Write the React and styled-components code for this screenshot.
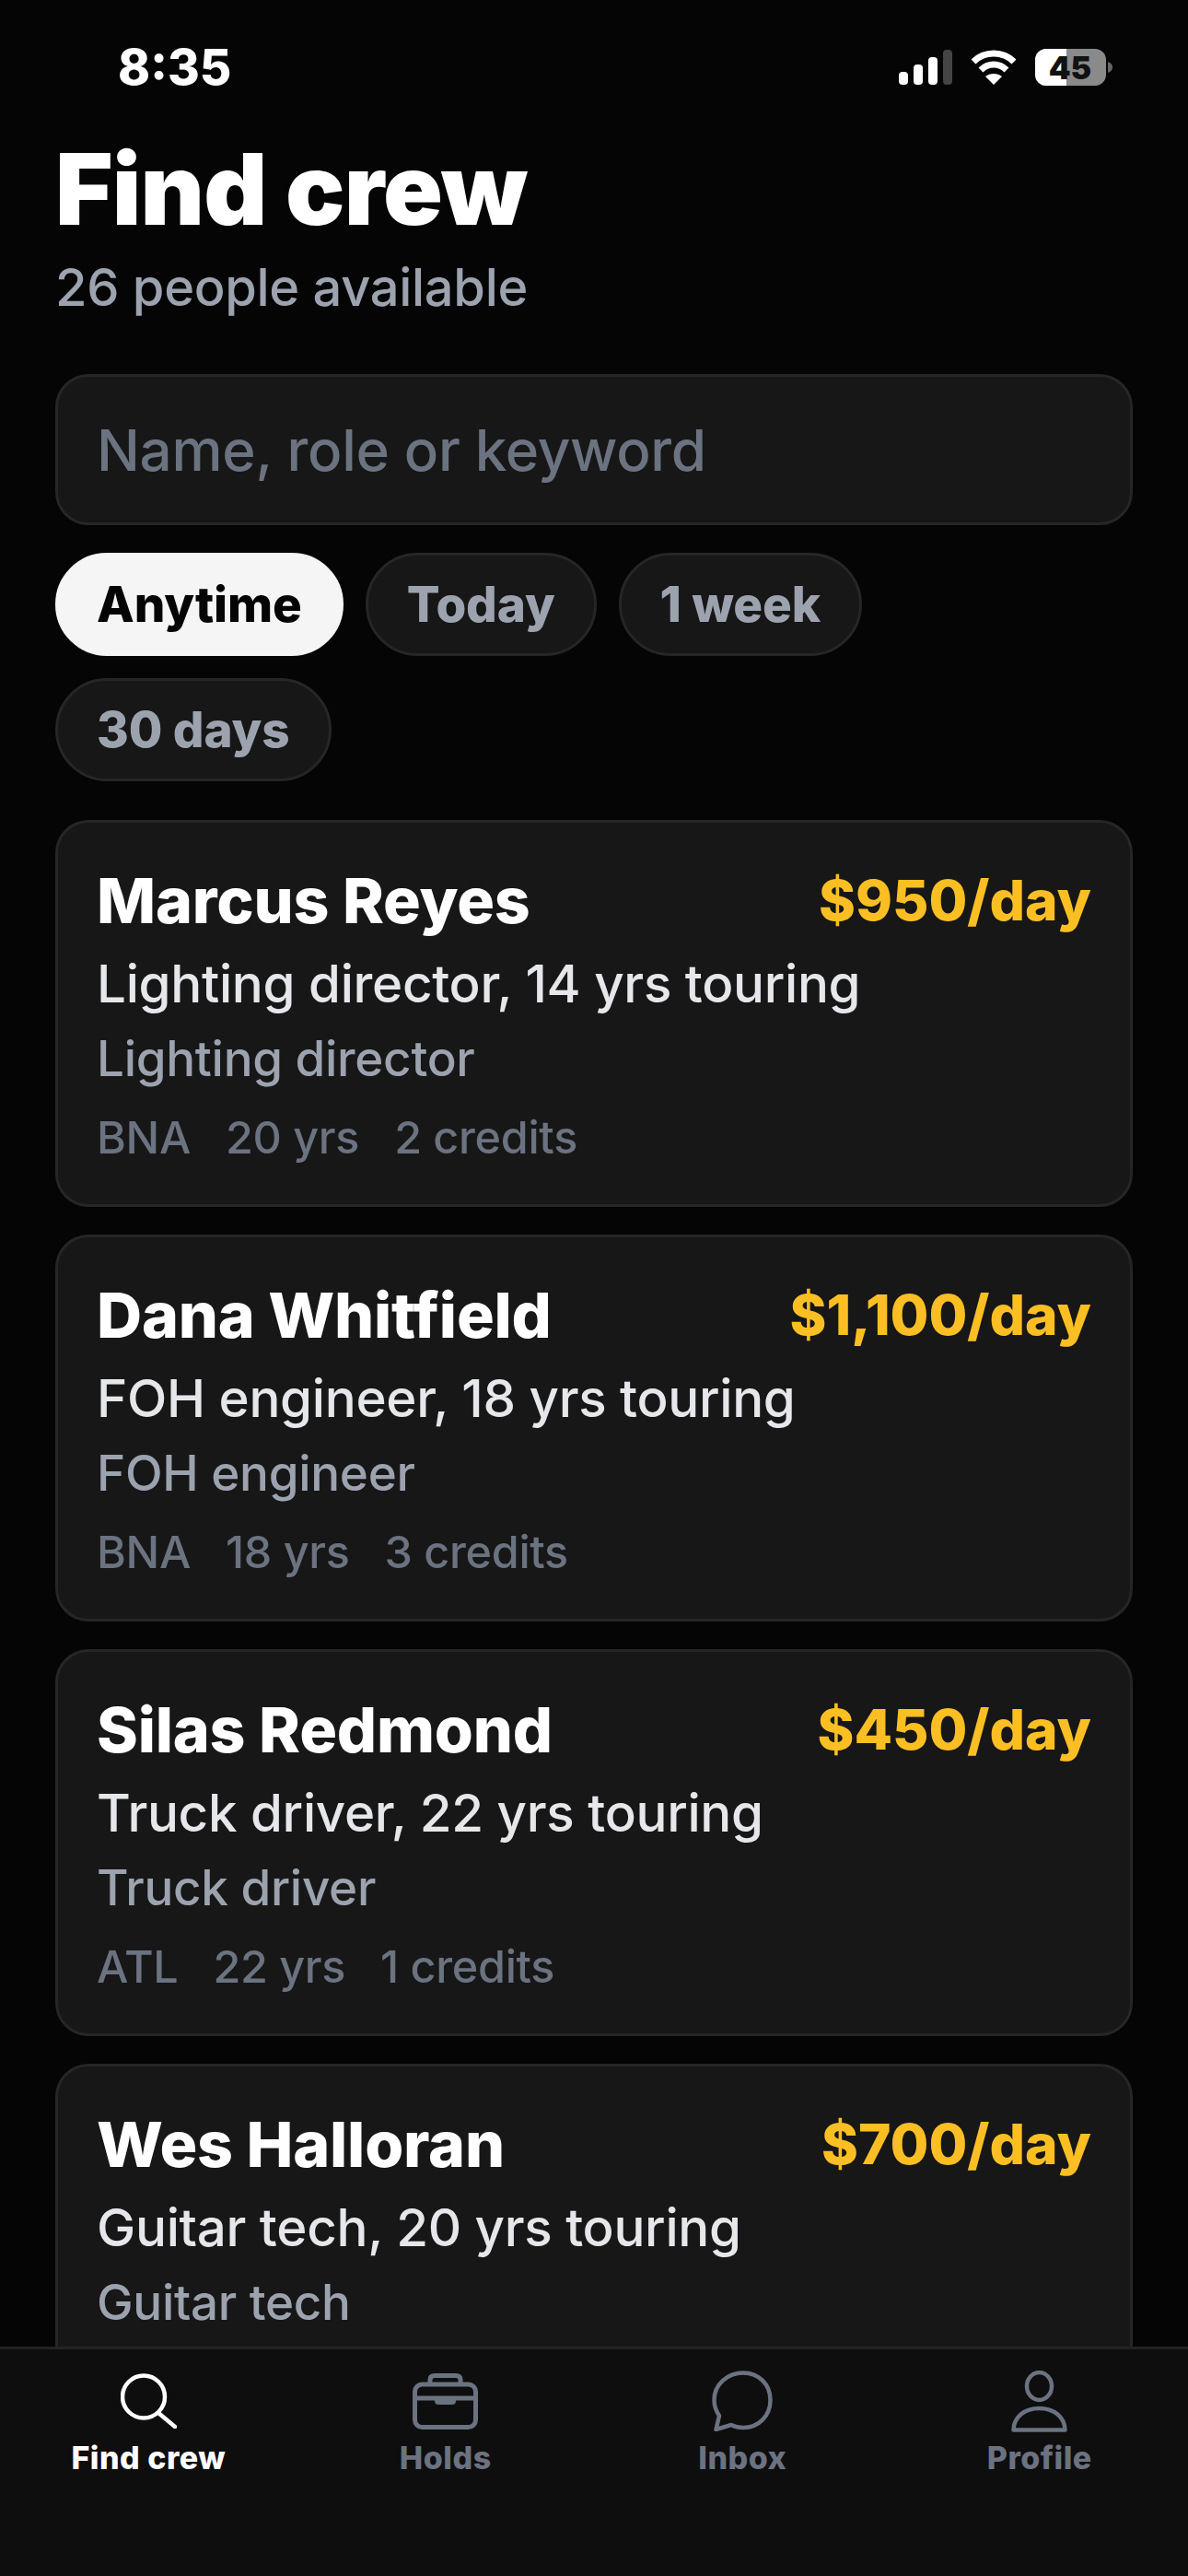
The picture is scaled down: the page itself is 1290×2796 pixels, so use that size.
import styled, { createGlobalStyle } from 'styled-components';

const GlobalStyle = createGlobalStyle`
html, body {
  margin: 0;
  padding: 0;
  background: #050506;
}
* { box-sizing: border-box; }
`

const Screen = styled.div`
position: relative;
width: 1290px;
height: 2796px;
overflow: hidden;
background: #050506;
font-family: Inter, "Liberation Sans", sans-serif;
`
const StatusBar = styled.div`
display: flex;
justify-content: space-between;
align-items: center;
height: 146px;
padding: 0 82px 0 128px;
`
const Clock = styled.div`
color: #fff;
font-size: 53px;
font-weight: 800;
`
const StatusIcons = styled.div`
display: flex;
align-items: center;
gap: 20px;
`
const Content = styled.div`
padding: 0 60px;
`
const Title = styled.h1`
margin: 0;
color: #fff;
font-size: 107px;
line-height: 118px;
font-weight: 900;
letter-spacing: -0.8px;
`
const SubTitle = styled.div`
margin-top: 14px;
color: #9ca3af;
font-size: 56px;
line-height: 68px;
font-weight: 500;
letter-spacing: -0.3px;
`
const SearchBox = styled.div`
display: flex;
align-items: center;
height: 164px;
margin-top: 60px;
padding: 0 42px;
background: #171717;
border: 3px solid #262626;
border-radius: 36px;
color: #6b7280;
font-size: 62px;
font-weight: 500;
letter-spacing: -0.3px;
`
const Chips = styled.div`
display: flex;
flex-wrap: wrap;
gap: 24px;
margin-top: 30px;
`
const Chip = styled.div`
display: flex;
align-items: center;
height: 112px;
padding: 0 42px;
border-radius: 56px;
font-size: 53px;
font-weight: 800;
letter-spacing: -0.1px;
background: ${p => (p.$active ? '#f5f5f6' : '#171717')};
border: 3px solid ${p => (p.$active ? '#f5f5f6' : '#262626')};
color: ${p => (p.$active ? '#050506' : '#9ca3af')};
`
const CardList = styled.div`
display: flex;
flex-direction: column;
gap: 30px;
margin-top: 42px;
`
const Card = styled.div`
height: 420px;
padding: 42px 42px 0;
background: #171717;
border: 3px solid #262626;
border-radius: 36px;
`
const CardHead = styled.div`
display: flex;
justify-content: space-between;
align-items: center;
height: 84px;
`
const Name = styled.div`
color: #fff;
font-size: 68px;
font-weight: 800;
letter-spacing: -0.2px;
`
const Rate = styled.div`
color: #fbbf24;
font-size: 60.5px;
font-weight: 800;
`
const Bio = styled.div`
margin-top: 10px;
color: #e5e7eb;
font-size: 56.5px;
line-height: 78px;
font-weight: 500;
letter-spacing: -0.3px;
`
const Role = styled.div`
margin-top: 4px;
color: #9ca3af;
font-size: 53px;
line-height: 76px;
font-weight: 500;
letter-spacing: -0.3px;
`
const Meta = styled.div`
display: flex;
gap: 38px;
margin-top: 15px;
color: #6b7280;
font-size: 48.5px;
line-height: 66px;
font-weight: 500;
letter-spacing: -0.3px;
`
const TabBar = styled.nav`
position: absolute;
left: 0;
right: 0;
bottom: 0;
height: 249px;
display: grid;
grid-template-columns: repeat(4, 1fr);
background: #0e0e0f;
border-top: 3px solid #232324;
`
const Tab = styled.div`
display: flex;
flex-direction: column;
align-items: center;
padding-top: 21px;
color: ${p => (p.$active ? '#fff' : '#6b7280')};
font-size: 34px;
font-weight: 800;
letter-spacing: 0.5px;
`
const TabIcon = styled.div`
display: flex;
align-items: center;
justify-content: center;
height: 70px;
`
const TabLabel = styled.div`
margin-top: 5px;
line-height: 44px;
`

const SignalIcon = () => (
  <svg width="58" height="38" viewBox="0 0 58 38">
    <rect x="0" y="24" width="10" height="14" rx="4" fill="#fff" />
    <rect x="16" y="16" width="10" height="22" rx="4" fill="#fff" />
    <rect x="32" y="8" width="10" height="30" rx="4" fill="#fff" />
    <rect x="48" y="0" width="10" height="38" rx="4" fill="#444" />
  </svg>
)

const WifiIcon = () => (
  <svg width="50" height="38" viewBox="0 0 50 38" fill="none" stroke="#fff" strokeWidth="7">
    <path d="M3 13C15 1 35 1 47 13" />
    <path d="M11 22C19 14 31 14 39 22" />
    <path d="M25 38L16 29C21 25 29 25 34 29Z" fill="#fff" stroke="none" />
  </svg>
)

const BatteryIcon = () => (
  <svg width="84" height="40" viewBox="0 0 84 40">
    <rect x="0" y="0" width="77" height="40" rx="12" fill="#8a8a8a" />
    <path d="M12 0H34V40H12A12 12 0 0 1 0 28V12A12 12 0 0 1 12 0Z" fill="#fff" />
    <path d="M79 14C82 15 84 17 84 20C84 23 82 25 79 26Z" fill="#666" />
    <text x="38" y="33" textAnchor="middle" fontFamily="Inter, sans-serif" fontSize="34" fontWeight="900" fill="#111">45</text>
  </svg>
)

const SearchIcon = () => (
  <svg width="61" height="60" viewBox="0 0 61 60" fill="none" stroke="currentColor" strokeWidth="4.5" strokeLinecap="round">
    <circle cx="25" cy="25.5" r="23" />
    <path d="M41 43L59 58" />
  </svg>
)

const BriefcaseIcon = () => (
  <svg width="71" height="61" viewBox="0 0 71 61" fill="none" stroke="currentColor" strokeWidth="5" strokeLinejoin="round">
    <rect x="2.5" y="12" width="66" height="46.5" rx="8" />
    <path d="M19 12V7C19 4 21 2.5 24 2.5H47C50 2.5 52 4 52 7V12" />
    <path d="M2.5 27H68.5" />
    <path d="M24 27H47V30C47 33 45 34 43 34H28C26 34 24 33 24 30Z" fill="currentColor" stroke="none" />
  </svg>
)

const BubbleIcon = () => (
  <svg width="66" height="66" viewBox="0 0 66 66" fill="none" stroke="currentColor" strokeWidth="4.5" strokeLinejoin="round">
    <path d="M34 2.5C51 2.5 63.5 15 63.5 32C63.5 49 51 62 34 62C29 62 25 61 21 59L4.5 64L8 49C4.5 44 2.5 38 2.5 32C2.5 15 17 2.5 34 2.5Z" />
  </svg>
)

const PersonIcon = () => (
  <svg width="61" height="67" viewBox="0 0 61 67" fill="none" stroke="currentColor" strokeWidth="4.5" strokeLinejoin="round">
    <ellipse cx="30.5" cy="17" rx="13.5" ry="15" />
    <path d="M2.5 64.5C3 50 15 41 30.5 41C46 41 58 50 58.5 64.5Z" />
  </svg>
)

const chips = ['Anytime', 'Today', '1 week', '30 days']

const people = [
  { name: 'Marcus Reyes', rate: '$950/day', bio: 'Lighting director, 14 yrs touring', role: 'Lighting director', meta: ['BNA', '20 yrs', '2 credits'] },
  { name: 'Dana Whitfield', rate: '$1,100/day', bio: 'FOH engineer, 18 yrs touring', role: 'FOH engineer', meta: ['BNA', '18 yrs', '3 credits'] },
  { name: 'Silas Redmond', rate: '$450/day', bio: 'Truck driver, 22 yrs touring', role: 'Truck driver', meta: ['ATL', '22 yrs', '1 credits'] },
  { name: 'Wes Halloran', rate: '$700/day', bio: 'Guitar tech, 20 yrs touring', role: 'Guitar tech', meta: ['BNA', '20 yrs', '1 credits'] },
]

const tabs = [
  { label: 'Find crew', Icon: SearchIcon, active: true },
  { label: 'Holds', Icon: BriefcaseIcon },
  { label: 'Inbox', Icon: BubbleIcon },
  { label: 'Profile', Icon: PersonIcon },
]

const App = () => {
  return (
    <Screen>
      <GlobalStyle />
      <StatusBar>
        <Clock>8:35</Clock>
        <StatusIcons>
          <SignalIcon />
          <WifiIcon />
          <BatteryIcon />
        </StatusIcons>
      </StatusBar>
      <Content>
        <Title>Find crew</Title>
        <SubTitle>26 people available</SubTitle>
        <SearchBox>Name, role or keyword</SearchBox>
        <Chips>
          {chips.map((c, i) => (
            <Chip key={c} $active={i === 0}>{c}</Chip>
          ))}
        </Chips>
        <CardList>
          {people.map(p => (
            <Card key={p.name}>
              <CardHead>
                <Name>{p.name}</Name>
                <Rate>{p.rate}</Rate>
              </CardHead>
              <Bio>{p.bio}</Bio>
              <Role>{p.role}</Role>
              <Meta>
                {p.meta.map(m => <span key={m}>{m}</span>)}
              </Meta>
            </Card>
          ))}
        </CardList>
      </Content>
      <TabBar>
        {tabs.map(({ label, Icon, active }) => (
          <Tab key={label} $active={active}>
            <TabIcon><Icon /></TabIcon>
            <TabLabel>{label}</TabLabel>
          </Tab>
        ))}
      </TabBar>
    </Screen>
  )
}

export default App
